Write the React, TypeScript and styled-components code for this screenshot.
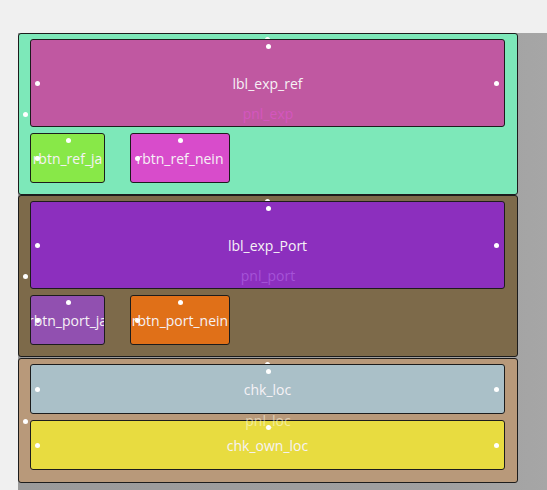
import styled, { createGlobalStyle } from 'styled-components'

const GlobalStyle = createGlobalStyle`
	html, body {
		margin: 0;
		padding: 0;
		background: #f0f0f0;
		font-family: "Open Sans", "Noto Sans", sans-serif;
	}
`

const Page = styled.div`
	padding: 33px 0 0 18px;
	width: 547px;
	height: 490px;
	box-sizing: border-box;
	overflow: hidden;
`

const Canvas = styled.div`
	height: 100%;
	background: linear-gradient(to right, #9a9a9a 0%, #a0a0a0 80%, #a6a6a6 100%);
	display: flex;
	flex-direction: column;
	align-items: flex-start;
`

const Panel = styled.div<{ $bg: string; $gapBefore?: number; $padBottom?: number }>`
	position: relative;
	box-sizing: border-box;
	width: 500px;
	margin-top: ${({ $gapBefore }) => $gapBefore ?? 0}px;
	padding: 5px 11px ${({ $padBottom }) => $padBottom ?? 11}px;
	background-color: ${({ $bg }) => $bg};
	border: 1px solid #1c1c1c;
	border-radius: 3px;
	display: flex;
	flex-direction: column;
	gap: 6px;
`

// panel name, drawn faintly over its children
const Caption = styled.span<{ $color: string }>`
	position: absolute;
	left: 0;
	right: 0;
	top: 50%;
	transform: translateY(-50%);
	text-align: center;
	font-size: 14px;
	line-height: 18px;
	color: ${({ $color }) => $color};
	z-index: 3;
	pointer-events: none;
`

const Row = styled.div`
	display: flex;
	gap: 25px;
`

const Control = styled.div<{ $bg: string; $w: number; $h: number }>`
	position: relative;
	z-index: 2;
	box-sizing: border-box;
	width: ${({ $w }) => $w}px;
	height: ${({ $h }) => $h}px;
	padding-top: 1px;
	background-color: ${({ $bg }) => $bg};
	border: 1px solid #1c1c1c;
	border-radius: 3px;
	display: flex;
	align-items: center;
	justify-content: center;
	overflow: hidden;
	white-space: nowrap;
	color: #f6f2f6;
	font-size: 14px;
	line-height: 18px;
`

const Handle = styled.span<{ $at: 'top' | 'left' | 'right' }>`
	position: absolute;
	width: 5px;
	height: 5px;
	border-radius: 50%;
	background: #fff;
	z-index: 4;
	${({ $at }) =>
		$at === 'top'
			? 'top: 4px; left: 50%; margin-left: -2px;'
			: $at === 'left'
				? 'left: 4px; top: 50%; margin-top: -2px;'
				: 'right: 5px; top: 50%; margin-top: -2px;'}
`

const PanelHandle = styled.span<{ $at: 'top' | 'left' }>`
	position: absolute;
	width: 5px;
	height: 5px;
	border-radius: 50%;
	background: #fff;
	z-index: 1;
	${({ $at }) =>
		$at === 'top'
			? 'top: 3px; left: 50%; margin-left: -3px;'
			: 'left: 4px; top: 50%; margin-top: -2px; z-index: 3;'}
`

interface BoxProps {
	text: string
	bg: string
	w: number
	h: number
	wide?: boolean
}

const Box = ({ text, bg, w, h, wide }: BoxProps) => (
	<Control $bg={bg} $w={w} $h={h}>
		{text}
		<Handle $at="top" />
		<Handle $at="left" />
		{wide && <Handle $at="right" />}
	</Control>
)

export default function App() {
	return (
		<>
			<GlobalStyle />
			<Page>
				<Canvas>
					<Panel $bg="#7de8b9">
						<PanelHandle $at="top" />
						<PanelHandle $at="left" />
						<Box text="lbl_exp_ref" bg="#c058a1" w={475} h={88} wide />
						<Row>
							<Box text="rbtn_ref_ja" bg="#88e848" w={75} h={50} />
							<Box text="rbtn_ref_nein" bg="#d84ccb" w={100} h={50} />
						</Row>
						<Caption $color="rgba(232, 84, 222, 0.5)">pnl_exp</Caption>
					</Panel>
					<Panel $bg="#7d6a4a">
						<PanelHandle $at="top" />
						<PanelHandle $at="left" />
						<Box text="lbl_exp_Port" bg="#8c2fbe" w={475} h={88} wide />
						<Row>
							<Box text="rbtn_port_ja" bg="#9150b0" w={75} h={50} />
							<Box text="rbtn_port_nein" bg="#e07018" w={100} h={50} />
						</Row>
						<Caption $color="rgba(190, 120, 240, 0.5)">pnl_port</Caption>
					</Panel>
					<Panel $bg="#b8997a" $gapBefore={1} $padBottom={12}>
						<PanelHandle $at="top" />
						<PanelHandle $at="left" />
						<Box text="chk_loc" bg="#aac0c8" w={475} h={50} wide />
						<Box text="chk_own_loc" bg="#e8dc40" w={475} h={50} wide />
						<Caption $color="rgba(255, 252, 230, 0.55)">pnl_loc</Caption>
					</Panel>
				</Canvas>
			</Page>
		</>
	)
}
